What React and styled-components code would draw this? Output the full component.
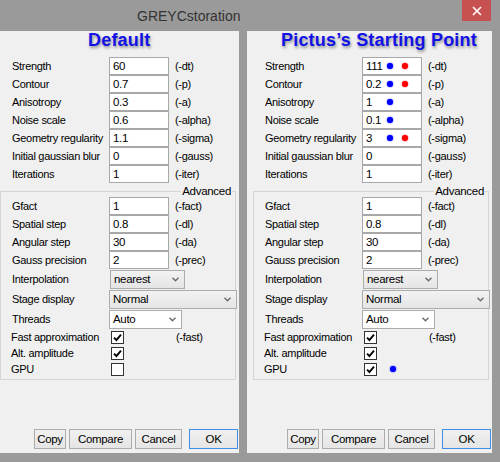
import React from "react";
import styled, { createGlobalStyle } from "styled-components";

const Global = createGlobalStyle`
  body {
    margin: 0;
    background: #9a9a9a;
    font-family: "Liberation Sans", Arial, sans-serif;
  }
`;

const Frame = styled.div`
  width: 500px;
  height: 462px;
  background: #9a9a9a;
  display: flex;
  flex-direction: column;
  overflow: hidden;
`;

const TitleBar = styled.div`
  height: 31px;
  display: flex;
  align-items: flex-start;
  padding-left: 137px;
  padding-right: 9px;
`;

const Title = styled.div`
  margin-top: 8px;
  font-size: 14px;
  line-height: 16px;
  color: #333;
  flex: 1;
`;

const CloseBtn = styled.div`
  width: 29px;
  height: 21px;
  background: #c75050;
  display: flex;
  align-items: center;
  justify-content: center;
`;

const Body = styled.div`
  display: flex;
  gap: 8px;
`;

const Window = styled.div`
  width: ${(p) => p.$width}px;
  height: 422px;
  background: #f0f0f0;
  overflow: hidden;
  display: flex;
`;

const Inner = styled.div`
  width: 245px;
  flex: none;
  margin-left: ${(p) => -p.$crop}px;
  display: flex;
  flex-direction: column;
  font-size: 11px;
  letter-spacing: -0.3px;
  color: #000;
`;

const Heading = styled.div`
  height: 18px;
  line-height: 18px;
  padding-left: ${(p) => p.$x}px;
  font-size: 18px;
  font-weight: bold;
  letter-spacing: 0.2px;
  color: #1212e6;
  text-shadow: 1px 2px 3px rgba(0, 0, 0, 0.4);
  white-space: nowrap;
`;

const Rows = styled.div`
  margin-top: 8px;
  padding-left: 18px;
`;

const Row = styled.div`
  display: grid;
  grid-template-columns: 97px 60px auto;
  align-items: center;
  height: ${(p) => p.$h || 18}px;
  white-space: nowrap;
`;

const Hint = styled.span`
  margin-left: 6px;
`;

const Box = styled.div`
  position: relative;
  box-sizing: border-box;
  height: 18px;
  border: 1px solid #a8a8a8;
  background: #fff;
  padding-left: 3px;
  font-size: 11.5px;
  line-height: 16px;
`;

const Dot = styled.span`
  display: inline-block;
  width: 6px;
  height: 6px;
  border-radius: 50%;
  background: ${(p) => p.$color};
  box-shadow: 0 0 1.5px ${(p) => p.$color};
`;

const BoxDot = styled(Dot)`
  position: absolute;
  top: 5px;
  left: ${(p) => p.$x}px;
`;

const Group = styled.div`
  position: relative;
  margin: 8px 3px 0 6px;
  border: 1px solid #d5d5d5;
  padding: 5px 0 2px 11px;
`;

const Legend = styled.span`
  position: absolute;
  top: -7px;
  right: 3px;
  padding: 0 1px;
  line-height: 13px;
  background: #f0f0f0;
  font-size: 11.5px;
`;

const Combo = styled.div`
  box-sizing: border-box;
  width: ${(p) => p.$w}px;
  height: 19px;
  margin-left: ${(p) => p.$shift || 0}px;
  border: 1px solid #acacac;
  background: ${(p) =>
    p.$white ? "#fff" : "linear-gradient(#f2f2f2, #e5e5e5)"};
  display: flex;
  align-items: center;
  justify-content: space-between;
  padding: 0 5px 0 3px;
  font-size: 11.5px;
`;

const CheckRow = styled.div`
  display: grid;
  grid-template-columns: 98px 67px auto;
  align-items: center;
  height: 16px;
  white-space: nowrap;
  margin-left: -1px;
`;

const CheckCell = styled.div`
  display: flex;
  align-items: center;
  gap: 13px;
  margin-left: 2px;
`;

const CheckBox = styled.div`
  box-sizing: border-box;
  width: 13px;
  height: 13px;
  border: 1px solid #333;
  background: #fff;
  display: flex;
  align-items: center;
  justify-content: center;
`;

const Buttons = styled.div`
  margin-top: auto;
  display: flex;
  justify-content: flex-end;
  padding: 0 1px 4px 0;
`;

const Button = styled.div`
  box-sizing: border-box;
  width: ${(p) => p.$w}px;
  height: 20px;
  margin-left: ${(p) => p.$gap}px;
  border: 1px solid ${(p) => (p.$def ? "#3d8ee6" : "#acacac")};
  background: linear-gradient(#f0f0f0, #e5e5e5);
  display: flex;
  align-items: center;
  justify-content: center;
  font-size: 11.5px;
`;

const Arrow = () => (
  <svg width="7" height="5" viewBox="0 0 7 5">
    <path d="M0.5 0.8 L3.5 3.8 L6.5 0.8" fill="none" stroke="#6a6a6a" strokeWidth="1.4" />
  </svg>
);

const Check = () => (
  <svg width="9" height="9" viewBox="0 0 9 9">
    <path d="M1 4.6 L3.4 7 L8 1.6" fill="none" stroke="#000" strokeWidth="1.9" />
  </svg>
);

const basic = [
  ["Strength", "(-dt)"],
  ["Contour", "(-p)"],
  ["Anisotropy", "(-a)"],
  ["Noise scale", "(-alpha)"],
  ["Geometry regularity", "(-sigma)"],
  ["Initial gaussian blur", "(-gauss)"],
  ["Iterations", "(-iter)"],
];

const advanced = [
  ["Gfact", "1", "(-fact)"],
  ["Spatial step", "0.8", "(-dl)"],
  ["Angular step", "30", "(-da)"],
  ["Gauss precision", "2", "(-prec)"],
];

const windows = [
  {
    width: 239,
    crop: 6,
    heading: "Default",
    headX: 94,
    values: ["60", "0.7", "0.3", "0.6", "1.1", "0", "1"],
    dots: [[], [], [], [], [], [], []],
    gpu: false,
  },
  {
    width: 245,
    crop: 0,
    heading: "Pictus\u2019s Starting Point",
    headX: 34,
    values: ["111", "0.2", "1", "0.1", "3", "0", "1"],
    dots: [["b", "r"], ["b", "r"], ["b"], ["b"], ["b", "r"], [], []],
    gpu: true,
  },
];

const dotColor = { b: "#0000ff", r: "#ff0000" };
const dotX = { b: 24, r: 39 };

function Dialog({ w }) {
  return (
    <Window $width={w.width}>
      <Inner $crop={w.crop}>
        <Heading $x={w.headX}>{w.heading}</Heading>
        <Rows>
          {basic.map(([label, hint], i) => (
            <Row key={label}>
              <span>{label}</span>
              <Box>
                {w.values[i]}
                {w.dots[i].map((d) => (
                  <BoxDot key={d} $color={dotColor[d]} $x={dotX[d]} />
                ))}
              </Box>
              <Hint>{hint}</Hint>
            </Row>
          ))}
        </Rows>
        <Group>
          <Legend>Advanced</Legend>
          {advanced.map(([label, value, hint]) => (
            <Row key={label}>
              <span>{label}</span>
              <Box>{value}</Box>
              <Hint>{hint}</Hint>
            </Row>
          ))}
          <Row $h={20}>
            <span>Interpolation</span>
            <Combo $w={75} $shift={1}>
              nearest <Arrow />
            </Combo>
          </Row>
          <Row $h={20}>
            <span>Stage display</span>
            <Combo $w={128}>
              Normal <Arrow />
            </Combo>
          </Row>
          <Row $h={20}>
            <span>Threads</span>
            <Combo $w={73} $white>
              Auto <Arrow />
            </Combo>
          </Row>
          <CheckRow>
            <span>Fast approximation</span>
            <CheckCell>
              <CheckBox>
                <Check />
              </CheckBox>
            </CheckCell>
            <span>(-fast)</span>
          </CheckRow>
          <CheckRow>
            <span>Alt. amplitude</span>
            <CheckCell>
              <CheckBox>
                <Check />
              </CheckBox>
            </CheckCell>
          </CheckRow>
          <CheckRow>
            <span>GPU</span>
            <CheckCell>
              <CheckBox>{w.gpu && <Check />}</CheckBox>
              {w.gpu && <Dot $color={dotColor.b} />}
            </CheckCell>
          </CheckRow>
        </Group>
        <Buttons>
          <Button $w={32} $gap={0}>Copy</Button>
          <Button $w={63} $gap={3}>Compare</Button>
          <Button $w={47} $gap={3}>Cancel</Button>
          <Button $w={49} $gap={7} $def>OK</Button>
        </Buttons>
      </Inner>
    </Window>
  );
}

export default function App() {
  return (
    <>
      <Global />
      <Frame>
        <TitleBar>
          <Title>GREYCstoration</Title>
          <CloseBtn>
            <svg width="10" height="10" viewBox="0 0 10 10">
              <path d="M1 1 L9 9 M9 1 L1 9" stroke="#fff" strokeWidth="1.6" />
            </svg>
          </CloseBtn>
        </TitleBar>
        <Body>
          {windows.map((w) => (
            <Dialog key={w.heading} w={w} />
          ))}
        </Body>
      </Frame>
    </>
  );
}
